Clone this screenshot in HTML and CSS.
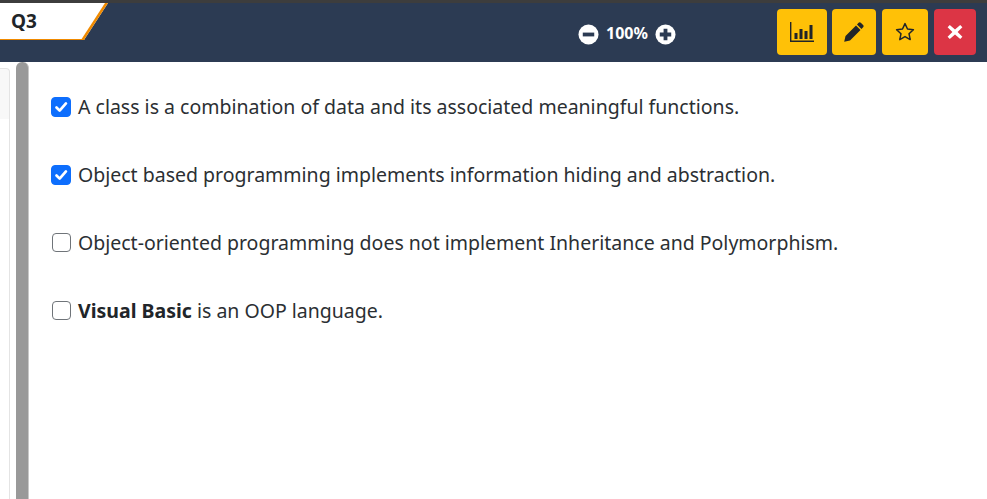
FILE: index.html
```html
<!DOCTYPE html>
<html lang="en">
<head>
    <meta charset="UTF-8">
    <title>Q3</title>
    <link rel="stylesheet" href="styles.css">
</head>
<body>
    <header class="topbar">
        <div class="tab">Q3</div>
        <div class="zoom">
            <svg class="zoom-icon" viewBox="0 0 22 22"><circle cx="11" cy="11" r="10.5" fill="#fff"/><rect x="5" y="9" width="12" height="4" fill="#2c3b53"/></svg>
            <span class="zoom-value">100%</span>
            <svg class="zoom-icon" viewBox="0 0 22 22"><circle cx="11" cy="11" r="10.5" fill="#fff"/><path d="M5 9h4V5h4v4h4v4h-4v4H9v-4H5z" fill="#2c3b53"/></svg>
        </div>
        <div class="actions">
            <button class="btn btn-stats" type="button">
                <svg width="24" height="20" viewBox="0 0 24 20"><path d="M0.7 0v19.3H24" fill="none" stroke="#212529" stroke-width="1.4"/><path d="M5 11h3v6H5zM10 7h3v10h-3zM15 9h3v8h-3zM20 3h3v14h-3z" fill="#212529" transform="translate(-0.5 0)"/></svg>
            </button>
            <button class="btn btn-edit" type="button">
                <svg width="20" height="20" viewBox="0 0 20 20"><path d="M14.6 0.8a1.6 1.6 0 0 1 2.2 0l2.3 2.3a1.6 1.6 0 0 1 0 2.2l-1.6 1.6-4.5-4.5zM12 3.4l4.5 4.5L6 18.4l-5.8 1.4L1.5 14z" fill="#212529"/></svg>
            </button>
            <button class="btn btn-star" type="button">
                <svg width="20" height="20" viewBox="0 0 20 20"><path d="M10 1.6l2.5 5.4 5.9.7-4.4 4 1.2 5.9-5.2-3-5.2 3 1.2-5.9-4.4-4 5.9-.7z" fill="none" stroke="#212529" stroke-width="1.5" stroke-linejoin="round"/></svg>
            </button>
            <button class="btn btn-close" type="button">
                <svg width="16" height="16" viewBox="0 0 16 16"><path d="M2.8 1L8 5.6 13.2 1 15.4 3.2 10.6 8l4.8 4.8-2.2 2.2L8 10.4 2.8 15 .6 12.8 5.4 8 .6 3.2z" fill="#fff"/></svg>
            </button>
        </div>
    </header>
    <main class="layout">
        <aside class="sidebar"><div class="sidebar-item"></div></aside>
        <div class="divider"></div>
        <section class="question">
            <label class="option"><input type="checkbox" checked><span>A class is a combination of data and its associated meaningful functions.</span></label>
            <label class="option"><input type="checkbox" checked><span>Object based programming implements information hiding and abstraction.</span></label>
            <label class="option"><input type="checkbox"><span>Object-oriented programming does not implement Inheritance and Polymorphism.</span></label>
            <label class="option"><input type="checkbox"><span><b>Visual Basic</b> is an OOP language.</span></label>
        </section>
    </main>
</body>
</html>
```

FILE: styles.css
```css
* {
    box-sizing: border-box;
}
html, body {
    height: 100%;
}
body {
    margin: 0;
    overflow: hidden;
    background-color: #fff;
    color: #212529;
    font-family: "Noto Sans", sans-serif;
    display: flex;
    flex-direction: column;
}
.topbar {
    position: relative;
    flex: none;
    height: 62px;
    background-color: #2c3b53;
    border-top: 3px solid #3d3d3d;
    display: flex;
    align-items: flex-start;
}
.tab {
    position: relative;
    width: 96px;
    height: 37px;
    padding: 3px 0 0 11px;
    font-size: 19px;
    font-weight: 700;
    line-height: 30px;
    z-index: 0;
}
.tab::before {
    content: "";
    position: absolute;
    top: 0;
    bottom: 0;
    left: -30px;
    right: 0;
    z-index: -1;
    background-color: #fff;
    border-right: 3px solid #f08a00;
    border-bottom: 1px solid #f08a00;
    transform: skewX(-33deg);
}
.zoom {
    position: absolute;
    left: 578px;
    top: 17px;
    display: flex;
    align-items: center;
    gap: 7px;
    color: #fff;
    font-weight: 700;
    font-size: 16px;
}
.zoom-icon {
    width: 21px;
    height: 21px;
    margin-top: 4px;
}
.zoom-value {
    line-height: 24px;
}
.actions {
    margin-left: auto;
    margin-right: 11px;
    margin-top: 6px;
    display: flex;
    gap: 5px;
}
.btn {
    height: 46px;
    border: none;
    border-radius: 4px;
    padding: 0;
    background-color: #ffc107;
    display: flex;
    align-items: center;
    justify-content: center;
}
.btn-stats { width: 50px; }
.btn-edit { width: 44px; }
.btn-star { width: 46px; margin-left: 1px; }
.btn-close { width: 42px; margin-left: 1px; background-color: #dc3545; }
.layout {
    flex: 1;
    display: flex;
    min-height: 0;
}
.sidebar {
    width: 16px;
    padding: 6px 6px 0 0;
}
.sidebar-item {
    height: 100%;
    background: linear-gradient(#f8f8f8 0 50px, #fff 50px);
    border: 1px solid #e4e4e4;
    border-left: none;
    border-bottom: none;
    border-top-right-radius: 4px;
}
.divider {
    width: 13px;
    background-color: #999;
    border-right: 1px solid #c8c8c8;
    border-radius: 6px 6px 0 0;
}
.question {
    flex: 1;
    padding: 28px 0 0 22px;
    display: flex;
    flex-direction: column;
    gap: 36px;
}
.option {
    display: flex;
    align-items: center;
    gap: 7px;
    height: 32px;
    font-size: 19.5px;
    color: #2b2f33;
}
.option b {
    color: #212529;
}
.option input {
    appearance: none;
    flex: none;
    width: 20px;
    height: 20px;
    margin: 1px 0 0 0;
    border: 1px solid #6f7479;
    border-radius: 4px;
    background-color: #fff;
}
.option input:not(:checked) {
    width: 19px;
    height: 19px;
    margin-left: 1px;
    margin-right: 0;
    border-width: 1.5px;
}
.option input:checked {
    border-color: #0d6efd;
    background-color: #0d6efd;
    background-image: url("data:image/svg+xml,%3Csvg xmlns='http://www.w3.org/2000/svg' viewBox='0 0 20 20'%3E%3Cpath fill='none' stroke='%23fff' stroke-linecap='round' stroke-linejoin='round' stroke-width='3' d='M5 10.5l3.5 3.5 7-8'/%3E%3C/svg%3E");
}
```
